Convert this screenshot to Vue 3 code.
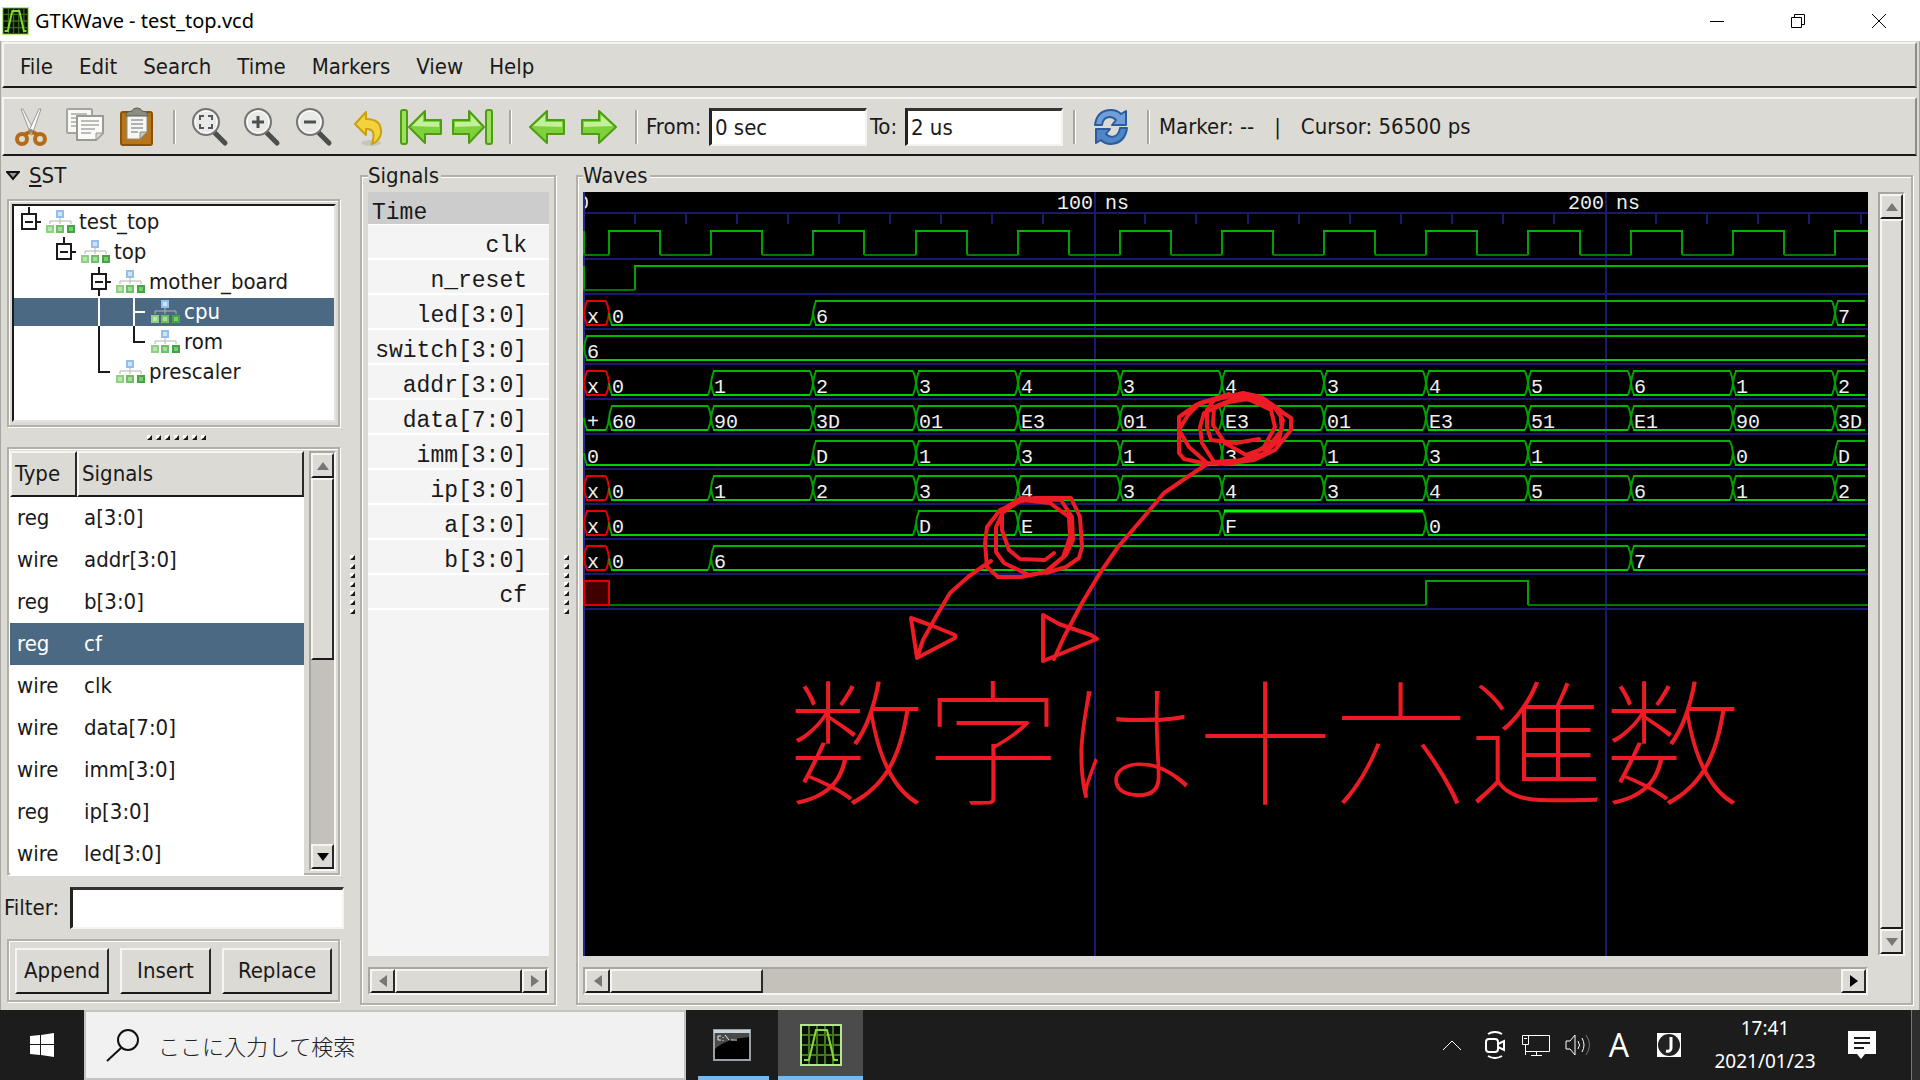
<script setup>
import { ref } from 'vue'

const menus = ['File', 'Edit', 'Search', 'Time', 'Markers', 'View', 'Help']
const from = ref('0 sec')
const to = ref('2 us')
const filter = ref('')
const query = ref('')

const tree = [
  { name: 'test_top', depth: 0, guides: 'M15 -1V5M23 14H27' },
  { name: 'top', depth: 1, guides: 'M50 -1V5M58 14H62' },
  { name: 'mother_board', depth: 2, guides: 'M85 -1V5M85 22V28M93 14H97' },
  { name: 'cpu', depth: 3, leaf: true, selected: true, guides: 'M85 0V28M120 0V28M120 14H131' },
  { name: 'rom', depth: 3, leaf: true, guides: 'M85 -2V30M120 -2V14H131' },
  { name: 'prescaler', depth: 2, leaf: true, guides: 'M85 -2V14H96' }
]

const list = [
  ['reg', 'a[3:0]'],
  ['wire', 'addr[3:0]'],
  ['reg', 'b[3:0]'],
  ['reg', 'cf'],
  ['wire', 'clk'],
  ['wire', 'data[7:0]'],
  ['wire', 'imm[3:0]'],
  ['reg', 'ip[3:0]'],
  ['wire', 'led[3:0]']
]

const names = ['clk', 'n_reset', 'led[3:0]', 'switch[3:0]', 'addr[3:0]', 'data[7:0]', 'imm[3:0]', 'ip[3:0]', 'a[3:0]', 'b[3:0]', 'cf']

// horizontal scale of the wave view: nanoseconds to pixels
const px = (ns) => Math.round(0.5 + ns * 5.108)
const top = (row) => 39 + row * 35
const bottom = (row) => 63 + row * 35

const ticks = Array.from({ length: 25 }, (_, i) => i + 1)
  .filter((n) => n % 10 !== 0)
  .map((n) => px(n * 10))

const counter = [[0, 'x'], [5, '0'], [25, '1'], [45, '2'], [65, '3'], [85, '4'], [105, '3'], [125, '4'], [145, '3'], [165, '4'], [185, '5'], [205, '6'], [225, '1'], [245, '2']]
const buses = [
  { row: 2, values: [[0, 'x'], [5, '0'], [45, '6'], [245, '7']] },
  { row: 3, values: [[0, '6']] },
  { row: 4, values: counter },
  { row: 5, values: [[0, '+'], [5, '60'], [25, '90'], [45, '3D'], [65, '01'], [85, 'E3'], [105, '01'], [125, 'E3'], [145, '01'], [165, 'E3'], [185, '51'], [205, 'E1'], [225, '90'], [245, '3D']] },
  { row: 6, values: [[0, '0'], [45, 'D'], [65, '1'], [85, '3'], [105, '1'], [125, '3'], [145, '1'], [165, '3'], [185, '1'], [225, '0'], [245, 'D']] },
  { row: 7, values: counter },
  { row: 8, values: [[0, 'x'], [5, '0'], [65, 'D'], [85, 'E'], [125, 'F'], [165, '0']] },
  { row: 9, values: [[0, 'x'], [5, '0'], [25, '6'], [205, '7']] }
]

const segments = buses.flatMap(({ row, values }) =>
  values.map(([start, value], i) => {
    const last = i === values.length - 1
    const a = px(start)
    const b = last ? 1282 : px(values[i + 1][0])
    const t = top(row)
    const m = t + 12
    const l = bottom(row)
    const low = value === '0' || value === '+'
    let sides = `M${a} ${m}L${a + 1} ${l - 6}L${a + 3} ${l}`
    if (!last) sides += `M${b} ${m}L${b - 1} ${l - 6}L${b - 3} ${l}`
    if (!low) {
      sides += `M${a} ${m}L${a + 1} ${t + 6}L${a + 3} ${t}`
      if (!last) sides += `M${b} ${m}L${b - 1} ${t + 6}L${b - 3} ${t}`
    }
    const end = last ? b : b - 3
    return {
      id: `${row}-${start}`,
      value,
      x: a + 3,
      y: l - 2,
      unknown: value === 'x',
      ones: value === 'F',
      sides,
      high: low ? '' : `M${a + 2} ${t}H${end}`,
      base: `M${a + 2} ${l}H${end}`
    }
  })
)

const clock = Array.from({ length: 25 }, (_, i) => ({ x: px(5 + i * 10), next: px(15 + i * 10), rise: i % 2 === 0 }))
const clockHigh = clock.filter((c) => c.rise).map((c) => `M${c.x - 1} 39H${c.next + 1}`).join('')
const clockLow = 'M0 63H26' + clock.filter((c) => !c.rise).map((c) => `M${c.x} 63H${c.next}`).join('')
const clockEdges = 'M1 39V63' + clock.map((c) => `M${c.x} 39V63`).join('')
</script>

<template>
  <div class="desktop">
    <header class="titlebar">
      <svg class="app-icon" viewBox="0 0 42 42" preserveAspectRatio="none">
        <rect width="42" height="42" fill="#b4e68c" />
        <rect x="2" y="2" width="38" height="38" fill="#081004" />
        <path d="M10 2V40M18 2V40M26 2V40M34 2V40M2 11H40M2 21H40M2 31H40" stroke="#3a6b1a" stroke-width="2" />
        <path d="M4 36H9L16 6H27L34 36H38" fill="none" stroke="#84dc30" stroke-width="3" />
      </svg>
      <h1>GTKWave - test_top.vcd</h1>
      <div class="window-buttons">
        <button aria-label="Minimize"><svg width="16" height="16"><path d="M1 8.5H15" stroke="#000" /></svg></button>
        <button aria-label="Restore"><svg width="16" height="16" fill="none" stroke="#000"><path d="M1.5 4.500H11.500V14.500H1.500ZM4.500 4V1.500H14.500V11.500H12" /></svg></button>
        <button aria-label="Close"><svg width="16" height="16"><path d="M1 1L15 15M15 1L1 15" stroke="#000" /></svg></button>
      </div>
    </header>

    <div class="window">
      <nav class="menubar">
        <button v-for="m in menus" :key="m">{{ m }}</button>
      </nav>

      <div class="toolbar">
        <button class="tool" aria-label="Cut">
          <svg width="40" height="40" viewBox="0 0 40 40">
            <path d="M10 2L12 2L24 26L20 28Z" fill="#f2f2f0" stroke="#9a9a96" />
            <path d="M30 2L28 2L17 26L21 28Z" fill="#fff" stroke="#9a9a96" />
            <ellipse cx="11" cy="32" rx="5" ry="5" fill="none" stroke="#b56a14" stroke-width="4" />
            <ellipse cx="29" cy="32" rx="5" ry="5" fill="none" stroke="#b56a14" stroke-width="4" />
            <path d="M14 27L19 25M26 27L21 25" stroke="#b56a14" stroke-width="4" />
            <circle cx="20" cy="24" r="2" fill="#888" />
          </svg>
        </button>
        <button class="tool tool-copy" aria-label="Copy">
          <svg width="40" height="40" viewBox="0 0 40 40">
            <rect x="2" y="2" width="25" height="24" rx="1" fill="#f8f8f6" stroke="#a4a49e" stroke-width="2" />
            <path d="M6 7H22M6 11H22M6 15H12M6 19H12" stroke="#bcbcb8" stroke-width="2" />
            <path d="M12 9H38V26L31 33H12Z" fill="#fafaf8" stroke="#9a9a94" stroke-width="2" />
            <path d="M16 14H34M16 18H34M16 22H30M16 26H26" stroke="#bcbcb8" stroke-width="2" />
            <path d="M31 33V26H38Z" fill="#d6d6d2" stroke="#9a9a94" />
          </svg>
        </button>
        <button class="tool tool-paste" aria-label="Paste">
          <svg width="40" height="40" viewBox="0 0 40 40">
            <rect x="4" y="5" width="31" height="33" rx="2" fill="#b8761a" stroke="#8a5208" stroke-width="2" />
            <path d="M10 8H30V25L23 32H10Z" fill="#f6f6f4" stroke="#8c8c86" />
            <path d="M14 13H26M14 17H26M14 21H26M14 25H21" stroke="#b0b0ac" stroke-width="2" />
            <path d="M23 32V25H30Z" fill="#c4c4c0" stroke="#8c8c86" />
            <path d="M9 9V7Q11 4 15 4Q16 1 20 1Q24 1 25 4Q29 4 31 7V9Z" fill="#8c8c80" stroke="#5c5c54" />
          </svg>
        </button>
        <span class="separator"></span>
        <button v-for="z in ['fit', 'in', 'out']" :key="z" class="tool tool-zoom" :aria-label="'Zoom ' + z">
          <svg width="40" height="40" viewBox="0 0 40 40">
            <path d="M25 25L36 36" stroke="#4a4e4c" stroke-width="5" stroke-linecap="round" />
            <circle cx="17" cy="15" r="13" fill="#e9e9e7" stroke="#747673" stroke-width="2" />
            <circle cx="17" cy="15" r="11" fill="none" stroke="#fff" stroke-width="1" />
            <path v-if="z === 'fit'" d="M11 13V9H15M19 9H23V13M23 17V21H19M15 21H11V17" fill="none" stroke="#555a57" stroke-width="2" />
            <path v-if="z === 'in'" d="M11 15H23M17 9V21" stroke="#4c504e" stroke-width="3" />
            <path v-if="z === 'out'" d="M11 15H23" stroke="#4c504e" stroke-width="3" />
          </svg>
        </button>
        <button class="tool tool-arrow undo" aria-label="Undo">
          <svg width="40" height="40" viewBox="0 0 40 40">
            <ellipse cx="22" cy="36" rx="10" ry="3" fill="#c6c4bf" />
            <path d="M17 5V12Q33 12 32 26Q31 34 23 37Q28 21 17 22V28L6 17Z" fill="#f3d23c" stroke="#c8a010" stroke-width="2" stroke-linejoin="round" />
          </svg>
        </button>
        <button class="tool tool-arrow" aria-label="Zoom to start">
          <svg width="42" height="40" viewBox="0 0 42 40">
            <rect x="1" y="3" width="6" height="34" rx="2" fill="#9be060" stroke="#4c9e10" stroke-width="2" />
            <path d="M25 4V13H41V27H25V36L9 20Z" fill="#7ed13c" stroke="#4c9e10" stroke-width="2" stroke-linejoin="round" />
            <path d="M12 19L23 8V15H39V20Z" fill="#c4f09a" />
          </svg>
        </button>
        <button class="tool tool-arrow" aria-label="Zoom to end">
          <svg width="42" height="40" viewBox="0 0 42 40">
            <rect x="34" y="3" width="6" height="34" rx="2" fill="#9be060" stroke="#4c9e10" stroke-width="2" />
            <path d="M17 4V13H1V27H17V36L32 20Z" fill="#7ed13c" stroke="#4c9e10" stroke-width="2" stroke-linejoin="round" />
            <path d="M29 19L19 8V15H3V20Z" fill="#c4f09a" />
          </svg>
        </button>
        <span class="separator tight"></span>
        <button class="tool tool-arrow" aria-label="Previous edge">
          <svg width="40" height="40" viewBox="0 0 40 40">
            <path d="M20 4V13H37V27H20V36L3 20Z" fill="#7ed13c" stroke="#4c9e10" stroke-width="2" stroke-linejoin="round" />
            <path d="M6 19L18 8V15H35V20Z" fill="#c4f09a" />
          </svg>
        </button>
        <button class="tool tool-arrow" aria-label="Next edge">
          <svg width="40" height="40" viewBox="0 0 40 40">
            <path d="M20 4V13H3V27H20V36L37 20Z" fill="#7ed13c" stroke="#4c9e10" stroke-width="2" stroke-linejoin="round" />
            <path d="M34 19L22 8V15H5V20Z" fill="#c4f09a" />
          </svg>
        </button>
        <span class="separator tight"></span>
        <label class="time-label" for="from">From:</label>
        <input id="from" v-model="from" class="entry time-entry" type="text" />
        <label class="time-label to" for="to">To:</label>
        <input id="to" v-model="to" class="entry time-entry" type="text" />
        <span class="separator"></span>
        <button class="tool tool-reload" aria-label="Reload">
          <svg width="40" height="40" viewBox="0 0 40 40">
            <path d="M4 18Q6 3 20 3Q26 3 30 7L35 4V18H21L25 13Q22 10 19 10Q12 10 11 18Z" fill="#6f9fd6" stroke="#2c5c9c" stroke-width="2" stroke-linejoin="round" />
            <path d="M36 21Q34 36 20 37Q14 37 10 33L5 36V22H19L15 27Q18 30 21 30Q28 29 29 21Z" fill="#4f86c8" stroke="#2c5c9c" stroke-width="2" stroke-linejoin="round" />
          </svg>
        </button>
        <span class="separator"></span>
        <div class="status"><span>Marker: --</span><span>|</span><span>Cursor: 56500 ps</span></div>
      </div>

      <main class="panes">
        <aside class="sst">
          <h2 class="sst-title">
            <svg width="14" height="10" viewBox="0 0 14 10"><path d="M1 1H13L7 8Z" fill="#999" stroke="#111" stroke-width="2" /></svg>
            <span><u>S</u>ST</span>
          </h2>
          <div class="frame tree-frame">
            <ul class="tree">
              <li v-for="n in tree" :key="n.name" :class="{ selected: n.selected }">
                <svg class="guides" :width="32 + n.depth * 35" height="28">
                  <path :d="n.guides" fill="none" stroke="currentColor" stroke-width="2" />
                  <path v-if="!n.leaf" :d="`M${8 + n.depth * 35} 6h14v15h-14ZM${11 + n.depth * 35} 14h8`" fill="none" stroke="#1a1a1a" stroke-width="2" />
                </svg>
                <svg class="module" width="29" height="24" viewBox="0 0 29 24">
                  <path d="M4 14V11H25V14M14 8V14" fill="none" stroke="#b4b4b4" stroke-width="1" />
                  <rect x="11" y="1" width="6" height="6" fill="#cfe2f8" stroke="#93bfec" stroke-width="2" />
                  <rect x="1" y="16" width="6" height="6" fill="#b8e6ac" stroke="#8fd084" stroke-width="2" />
                  <rect x="11" y="16" width="6" height="6" fill="#a4dc98" stroke="#70bf68" stroke-width="2" />
                  <rect x="22" y="16" width="6" height="6" fill="#78cc70" stroke="#46a344" stroke-width="2" />
                </svg>
                <span>{{ n.name }}</span>
              </li>
            </ul>
          </div>
          <div class="grip horizontal"><i v-for="n in 7" :key="n"></i></div>
          <div class="frame list-frame">
            <div class="list-view">
              <table>
                <thead><tr><th class="type">Type</th><th>Signals</th></tr></thead>
                <tbody>
                  <tr v-for="[type, name] in list" :key="name" :class="{ selected: name === 'cf' }">
                    <td>{{ type }}</td><td>{{ name }}</td>
                  </tr>
                </tbody>
              </table>
            </div>
            <div class="scrollbar vertical">
              <button aria-label="Scroll up"><svg width="12" height="8"><path d="M0 8H12L6 0Z" fill="#777" /></svg></button>
              <span class="thumb list-thumb"></span>
              <span class="trough"></span>
              <button aria-label="Scroll down"><svg width="12" height="8"><path d="M0 0H12L6 8Z" /></svg></button>
            </div>
          </div>
          <div class="filter">
            <label for="filter">Filter:</label>
            <input id="filter" v-model="filter" class="entry" type="text" />
          </div>
          <div class="frame actions">
            <button class="append">Append</button>
            <button class="insert">Insert</button>
            <button class="replace">Replace</button>
          </div>
        </aside>

        <div class="grip upright"><i v-for="n in 7" :key="n"></i></div>

        <fieldset class="group signals">
          <legend>Signals</legend>
          <div class="names">
            <div class="time">Time</div>
            <div v-for="n in names" :key="n" class="name">{{ n }}</div>
          </div>
          <div class="scrollbar level">
            <button aria-label="Scroll left"><svg width="8" height="12"><path d="M8 0V12L0 6Z" fill="#777" /></svg></button>
            <span class="thumb grow"></span>
            <button aria-label="Scroll right"><svg width="8" height="12"><path d="M0 0V12L8 6Z" fill="#777" /></svg></button>
          </div>
        </fieldset>

        <div class="grip upright second"><i v-for="n in 7" :key="n"></i></div>

        <fieldset class="group waves">
          <legend>Waves</legend>
          <div class="waves-row">
            <div class="view">
              <svg class="canvas">
                <g fill="none" stroke="#191970" stroke-width="2">
                  <line x1="0" y1="21" x2="100%" y2="21" />
                  <path v-for="t in ticks" :key="t" :d="`M${t} 21V32`" />
                  <line v-for="n in 11" :key="n" x1="0" :y1="32 + n * 35" x2="100%" :y2="32 + n * 35" />
                </g>
                <g class="caption">
                  <text x="-6" y="17">0</text>
                  <text x="474" y="17">100 ns</text>
                  <text x="985" y="17">200 ns</text>
                </g>
                <g stroke="#191970" stroke-width="2">
                  <line x1="1" y1="0" x2="1" y2="100%" stroke="#28288c" />
                  <line x1="512" y1="0" x2="512" y2="100%" />
                  <line x1="1023" y1="0" x2="1023" y2="100%" />
                </g>
                <g fill="none" stroke="#00a000" stroke-width="2">
                  <path :d="clockEdges" />
                  <path :d="clockLow" stroke="#007800" />
                  <path :d="clockHigh" stroke="#00b400" />
                  <path d="M1 74V98M52 74V98" />
                  <path d="M0 98H52" stroke="#007800" />
                  <path d="M51 74H1285" stroke="#00b400" />
                  <path d="M26 413H843M945 413H1285" stroke="#007800" />
                  <path d="M843 413V389H945V413" />
                </g>
                <rect x="1" y="389" width="25" height="24" fill="#400000" stroke="#e00000" stroke-width="2" />
                <g v-for="s in segments" :key="s.id" fill="none" stroke-width="2" :class="['segment', { unknown: s.unknown, ones: s.ones }]">
                  <path class="sides" :d="s.sides" />
                  <path class="high" :d="s.high" />
                  <path class="base" :d="s.base" />
                </g>
                <g class="caption">
                  <text v-for="s in segments" :key="s.id" :x="s.x" :y="s.y">{{ s.value }}</text>
                </g>
                <g class="pen">
                  <path d="M471 361L462 368L437 367L426 358L419 338L419 321L438 308L467 311L486 325L487 345L480 365L462 380L446 383L421 371L413 360L413 335L422 316L438 306L478 308L489 325L490 348L483 363L463 380L438 385L415 385L404 375L402 351L404 335L417 318L435 310L453 306L488 306L497 325L499 355L496 366L483 375L463 381" />
                  <path d="M408 369L399 375L385 385L367 401L354 423L340 448L334 466M328 426L350 434L372 443L372 446L334 466Z" />
                  <path d="M676 247L653 251L628 248L624 235L624 218L631 208L660 201L678 205L697 218L699 238L685 255L663 263L642 251L630 233L631 215L653 206L667 208L688 218L692 235L681 255L660 268L631 270L619 251L617 235L621 221L646 210L671 206L696 218L708 226L708 238L692 258L671 268L642 272L624 271L606 255L596 238L605 223L617 211L646 203L671 204L690 213L700 228L696 248L680 262L650 270" />
                  <path d="M646 202L613 213L596 225L596 261L601 267L624 272L603 286L581 301L560 326L535 355L517 381L499 411L481 445L471 467M460 423L476 432L508 443L514 447L460 469Z" />
                </g>
                <text class="handwriting" x="206" y="603">数字は十六進数</text>
              </svg>
            </div>
            <div class="scrollbar vertical">
              <button aria-label="Scroll waves up"><svg width="12" height="8"><path d="M0 8H12L6 0Z" fill="#777" /></svg></button>
              <span class="thumb grow"></span>
              <button aria-label="Scroll waves down"><svg width="12" height="8"><path d="M0 0H12L6 8Z" fill="#777" /></svg></button>
            </div>
          </div>
          <div class="scrollbar level wave-scroll">
            <button aria-label="Scroll waves left"><svg width="8" height="12"><path d="M8 0V12L0 6Z" fill="#777" /></svg></button>
            <span class="thumb wave-thumb"></span>
            <span class="trough"></span>
            <button aria-label="Scroll waves right"><svg width="8" height="12"><path d="M0 0V12L8 6Z" /></svg></button>
          </div>
        </fieldset>
      </main>
    </div>

    <footer class="taskbar">
      <button class="start" aria-label="Start">
        <svg width="24" height="24" viewBox="0 0 24 24" fill="#fff"><path d="M0 3L10 2V11H0ZM11 2L24 0V11H11ZM0 12H10V22L0 21ZM11 12H24V24L11 22Z" /></svg>
      </button>
      <label class="search">
        <svg width="34" height="34" viewBox="0 0 34 34" fill="none" stroke="#111" stroke-width="2"><circle cx="22" cy="12" r="10" /><path d="M15 20L1 33" /></svg>
        <input v-model="query" type="text" placeholder="ここに入力して検索" aria-label="検索" />
      </label>
      <button class="task cmd" aria-label="Command Prompt">
        <svg width="38" height="32" viewBox="0 0 38 32">
          <rect x="1" y="1" width="36" height="30" fill="#000" stroke="#98a0a6" stroke-width="2" />
          <path d="M2 4H36V8Q12 10 2 20Z" fill="#4a4a4a" />
          <rect x="1" y="1" width="36" height="3" fill="#ccd6da" />
          <path d="M8 7H5V11H8M10 8V9M10 11V12M12 6L16 11M18 11H24" fill="none" stroke="#e8e8e8" />
        </svg>
      </button>
      <button class="task active" aria-label="GTKWave">
        <svg width="42" height="42" viewBox="0 0 42 42">
          <rect width="42" height="42" fill="#b4e68c" />
          <rect x="2" y="2" width="38" height="38" fill="#081004" />
          <path d="M9 2V40M17 2V40M25 2V40M33 2V40M2 11H40M2 21H40M2 31H40" stroke="#44751f" stroke-width="2" />
          <path d="M4 36H9L16 6H27L34 36H38" fill="none" stroke="#84dc30" stroke-width="2" />
        </svg>
      </button>
      <div class="tray">
        <button class="chevron" aria-label="Hidden icons"><svg width="20" height="12" fill="none" stroke="#fff"><path d="M1 11L10 2L19 11" /></svg></button>
        <svg class="camera" width="20" height="28" fill="none" stroke="#fff" stroke-width="2"><rect x="1" y="8" width="12" height="13" rx="3" /><path d="M13 13L19 10V19L13 16M3 3Q10 -1 17 3M3 25Q10 29 17 25" /></svg>
        <svg class="network" width="28" height="22" fill="none" stroke="#fff"><path d="M6 1.500H27.500V17.500H4M14.500 18V21M9 21.500H20M0.500 1.500H6.500V10.500H0.500ZM3.500 10V21M2 4.500H5" /></svg>
        <svg class="volume" width="27" height="24" fill="none" stroke="#fff"><path d="M1 8H5L10 2V22L5 16H1ZM13 8Q16 12 13 16M17 5Q21 12 17 19" /><path d="M21 2Q28 12 21 22" stroke="#777" /></svg>
        <span class="ime">A</span>
        <svg class="jp" width="26" height="26"><rect x="1" y="1" width="24" height="24" fill="#fff" /><circle cx="13" cy="13" r="11" fill="#222" /><path d="M15 5V16Q15 20 10 19" fill="none" stroke="#fff" stroke-width="3" /></svg>
        <time class="clock"><span>17:41</span><span>2021/01/23</span></time>
        <button class="notes" aria-label="Notifications">
          <svg width="28" height="28"><path d="M0 0H28V23H17L13 28L9 23H0Z" fill="#fff" /><path d="M6 7H22M6 12H22M6 17H16" stroke="#1c1c1c" stroke-width="2" /></svg>
        </button>
        <span class="show-desktop"></span>
      </div>
    </footer>
  </div>
</template>

<style>
body {
  margin: 0;
}
</style>

<style scoped>
* {
  box-sizing: border-box;
}
.desktop {
  display: flex;
  flex-direction: column;
  min-height: 100vh;
  font-family: 'DejaVu Sans Condensed', 'Noto Sans', sans-serif;
  font-size: 22px;
  line-height: 26px;
  color: #1a1a1a;
  background: #dcdad5;
}
button,
input {
  font: inherit;
  color: inherit;
  border: 0;
  padding: 0;
  margin: 0;
  background: none;
  min-width: 0;
  border-radius: 0;
  outline: 0;
}
button {
  display: flex;
  align-items: center;
  justify-content: center;
}
svg {
  display: block;
  flex: none;
}
h1,
h2,
ul {
  margin: 0;
  padding: 0;
  font-weight: normal;
}

.titlebar {
  display: flex;
  align-items: center;
  height: 41px;
  padding: 0 1px 0 2px;
  background: #fff;
  color: #000;
}
.app-icon {
  width: 27px;
  height: 28px;
}
.titlebar h1 {
  margin-left: 6px;
  flex: 1;
  font-family: 'Noto Sans', sans-serif;
  font-size: 20px;
}
.window-buttons {
  display: flex;
}
.window-buttons button {
  width: 81px;
  height: 40px;
}

.window {
  flex: 1;
  display: flex;
  flex-direction: column;
  border: 1px solid #a8a6a0;
  border-width: 0 1px;
}
.menubar {
  display: flex;
  align-items: center;
  height: 46px;
  margin: 1px 2px 0 1px;
  padding: 3px 0 0 3px;
  border: 2px solid #f6f5f3;
  border-right-color: #8e8c86;
  border-bottom-color: #1a1a1a;
}
.menubar button {
  height: 40px;
  padding: 0 13px;
}

.toolbar {
  display: flex;
  align-items: center;
  height: 59px;
  margin: 9px 2px 0 1px;
  padding-left: 7px;
  border: 2px solid #f6f5f3;
  border-right-color: #8e8c86;
  border-bottom-color: #1a1a1a;
}
.tool {
  width: 40px;
  height: 44px;
}
.tool-copy {
  margin-left: 14px;
}
.tool-paste {
  margin-left: 12px;
}
.separator {
  width: 3px;
  height: 34px;
  margin: 0 5px 0 16px;
  border-left: 2px solid #aaa79f;
  border-right: 1px solid #fff;
}
.separator.tight {
  margin: 0 8px 0 11px;
}
.tool-zoom {
  margin: 0 4px 0 8px;
}
.tool-arrow {
  margin: 0 5px 0 7px;
}
.tool-arrow.undo {
  margin-left: 12px;
}
.entry {
  background: #fff;
  border: 2px solid #f4f3f0;
  border-top: 3px solid #333;
  border-left: 3px solid #222;
}
.time-label {
  width: 63px;
}
.time-label.to {
  width: 35px;
  margin-left: 3px;
}
.time-entry {
  width: 158px;
  height: 38px;
  padding-left: 3px;
}
.time-entry + .separator {
  margin-left: 10px;
}
.tool-reload {
  margin: 0 6px 0 10px;
}
.tool-reload + .separator {
  margin: 0 9px 0 10px;
}
.status {
  display: flex;
  gap: 20px;
}

.panes {
  flex: 1;
  display: flex;
  padding: 7px 6px 5px 0;
}
.frame {
  border: 2px solid #b3b0a8;
  box-shadow: 1px 1px 0 #fff, inset 1px 1px 0 #fff;
}
.sst {
  width: 343px;
  display: flex;
  flex-direction: column;
}
.sst-title {
  display: flex;
  align-items: center;
  gap: 9px;
  height: 26px;
  padding-left: 5px;
  font-size: 22px;
}
.tree-frame {
  height: 228px;
  margin: 10px 4px 0 6px;
  padding: 3px 2px 3px 3px;
}
.tree {
  height: 100%;
  padding-top: 2px;
  list-style: none;
  background: #fff;
  border: 2px solid #e4e2de;
  border-top-color: #1a1a1a;
  border-left-color: #1a1a1a;
}
.tree li {
  display: flex;
  align-items: center;
  height: 30px;
  border-bottom: 2px solid transparent;
  background-clip: padding-box;
}
.tree .guides {
  overflow: visible;
}
.tree .module {
  margin-right: 4px;
}
.selected {
  background-color: #4b6983;
  color: #fff;
}

.grip {
  display: flex;
}
.grip i {
  width: 5px;
  height: 5px;
  border: 2px solid #fff;
  border-right-color: #1a1a1a;
  border-bottom-color: #1a1a1a;
}
.horizontal {
  height: 20px;
  align-items: center;
  justify-content: center;
  gap: 4px;
  padding-left: 8px;
}
.upright {
  width: 16px;
  flex-direction: column;
  align-items: center;
  justify-content: center;
  gap: 4px;
}
.upright.second {
  width: 20px;
}

.list-frame {
  display: flex;
  flex: 1 1 0;
  min-height: 0;
  margin: 0 4px 0 6px;
  padding: 2px 2px 2px 1px;
}
.list-view {
  flex: 1;
  height: 424px;
  overflow: hidden;
  background: #fff;
}
table {
  width: 100%;
  border-collapse: separate;
  border-spacing: 0;
}
th {
  height: 46px;
  padding: 0 0 0 3px;
  text-align: left;
  font-weight: normal;
  background: #dcdad5;
  border: 2px solid #f6f5f3;
  border-right-color: #2a2a2a;
  border-bottom-color: #1a1a1a;
}
.type {
  width: 67px;
}
td {
  height: 42px;
  padding: 0 0 0 7px;
}

.scrollbar {
  display: flex;
  background: #c3c1ba;
  border: 2px solid #a9a69f;
  border-right-color: #f6f5f3;
  border-bottom-color: #f6f5f3;
}
.scrollbar button,
.thumb {
  background: #dcdad5;
  border: 2px solid #f6f5f3;
  border-right-color: #2a2a2a;
  border-bottom-color: #1a1a1a;
}
.vertical {
  flex-direction: column;
  width: 27px;
}
.list-frame .vertical {
  margin: 0 0 0 5px;
}
.vertical button {
  height: 25px;
}
.level {
  height: 28px;
  margin-top: 11px;
}
.level button {
  width: 25px;
}
.list-thumb {
  height: 182px;
}
.wave-thumb {
  width: 153px;
}
.trough,
.grow {
  flex: 1;
}

.filter {
  display: flex;
  align-items: center;
  height: 42px;
  margin-top: 12px;
  padding-left: 3px;
}
.filter label {
  width: 66px;
}
.filter input {
  flex: 1;
  height: 42px;
}
.actions {
  display: flex;
  gap: 11px;
  height: 63px;
  margin: 10px 4px 3px 6px;
  padding: 7px 6px 6px 6px;
}
.actions button {
  border: 2px solid #f6f5f3;
  border-right-color: #2a2a2a;
  border-bottom-color: #1a1a1a;
}
.append {
  width: 94px;
}
.insert {
  width: 91px;
}
.replace {
  flex: 1;
}

.group {
  display: flex;
  flex-direction: column;
  min-width: 0;
  margin: 0;
  padding: 3px 5px 8px 6px;
  border: 2px solid #b3b0a8;
  box-shadow: 1px 1px 0 #fff, inset 1px 1px 0 #fff;
}
.group legend {
  padding: 0 2px 0 0;
  background: #dcdad5;
}
.signals {
  width: 196px;
}
.names {
  flex: 1;
  background: #f4f4f4;
  font-family: 'Liberation Mono', monospace;
  font-size: 23px;
}
.time {
  height: 33px;
  padding: 8px 0 0 4px;
  background: #ccc;
  border-bottom: 1px solid #fff;
}
.name {
  height: 35px;
  padding: 8px 22px 0 0;
  text-align: right;
  border-bottom: 2px solid #fff;
}
.waves {
  flex: 1;
  padding-left: 5px;
}
.waves-row {
  flex: 1;
  display: flex;
  gap: 10px;
}
.view {
  flex: 1;
  display: flex;
  background: #000;
}
.canvas {
  flex: 1 1 0;
  min-width: 0;
  height: auto;
  width: 100%;
}
.caption {
  fill: #f0f0f0;
  font-family: 'Liberation Mono', monospace;
  font-size: 20px;
}
.sides {
  stroke: #00a000;
}
.high {
  stroke: #00b400;
}
.base {
  stroke: #00d000;
}
.ones .high {
  stroke: #00ff00;
  stroke-width: 3px;
}
.unknown path {
  stroke: #e80000;
}
.pen {
  fill: none;
  stroke: #ed1c24;
  stroke-width: 4px;
  stroke-linejoin: round;
  stroke-linecap: round;
}
.handwriting {
  fill: #ed1c24;
  font-family: 'Noto Sans CJK JP', sans-serif;
  font-size: 136px;
  font-weight: 100;
}
.waves .vertical {
  margin-right: 1px;
}
.wave-scroll {
  margin-right: 38px;
}

.taskbar {
  display: flex;
  align-items: stretch;
  height: 70px;
  background: #1c1c1c;
  color: #fff;
  font-family: 'Noto Sans', 'Noto Sans CJK JP', sans-serif;
}
.start {
  width: 84px;
}
.search {
  display: flex;
  align-items: center;
  width: 602px;
  padding-left: 20px;
  background: #f1f1f1;
  border: 2px solid #c3c3c3;
}
.search input {
  flex: 1;
  height: 40px;
  margin-left: 18px;
  color: #222;
  font-family: 'Noto Sans CJK JP', sans-serif;
  font-size: 22px;
}
.search input::placeholder {
  color: #222;
  font-weight: 300;
  opacity: 1;
}
.task {
  width: 85px;
  border-bottom: 4px solid #76b9ed;
  padding-top: 4px;
}
.cmd {
  width: 71px;
  margin: 0 9px 0 12px;
  padding-right: 4px;
}
.active {
  background: #4b4b4b;
}
.tray {
  display: flex;
  flex: 1;
  align-items: center;
  justify-content: flex-end;
}
.camera {
  margin-left: 23px;
}
.network {
  margin-left: 17px;
}
.volume {
  margin-left: 15px;
}
.ime {
  margin-left: 17px;
  font-family: 'Open Sans', sans-serif;
  font-size: 32px;
  line-height: 40px;
}
.jp {
  margin-left: 27px;
}
.clock {
  display: flex;
  flex-direction: column;
  align-items: center;
  width: 166px;
  font-size: 19px;
  line-height: 33px;
}
.notes {
  width: 28px;
}
.show-desktop {
  width: 9px;
  height: 70px;
  margin-left: 35px;
  background: #2e2e2e;
  border-left: 1px solid #777;
}
</style>
